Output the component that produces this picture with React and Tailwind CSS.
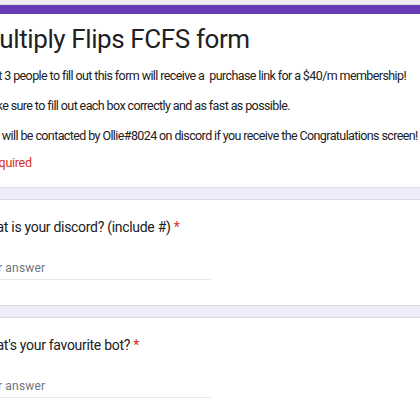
import React from "react";

const questions = [
  { id: 1, label: "What is your discord? (include #)" },
  { id: 2, label: "What's your favourite bot?" },
];

function QuestionCard({ label }) {
  return (
    <div className="bg-white border border-[#dadce0] rounded-lg px-6 pt-[15px] pb-[25px]">
      <div className="text-[14px] leading-[24px] tracking-[-0.3px] text-[#202124]">
        {label} <span className="text-[#d93025]">*</span>
      </div>
      <div className="mt-[23px] w-[234px] border-b border-[#e8e8ec] pb-[4px]">
        <div className="text-[12px] leading-[13px] text-[#70757a] tracking-[0.2px]">
          Your answer
        </div>
      </div>
    </div>
  );
}

export default function App() {
  return (
    <div className="h-[420px] overflow-hidden bg-[#f0ebf8] pt-[4px] font-['Roboto','Liberation_Sans',sans-serif]">
      <div className="ml-[-48px] w-[640px] flex flex-col gap-[11px]">
        <div className="bg-white border border-[#dadce0] rounded-lg overflow-hidden">
          <div className="h-[9px] bg-[#673ab7]" />
          <div className="px-6 pt-[9px] pb-[17px]">
            <h1 className="text-[26px] leading-[32px] tracking-[-0.4px] text-[#202124]">
              Multiply Flips FCFS form
            </h1>
            <div className="mt-[13px] pl-[3px] flex flex-col gap-[15px] text-[12.5px] leading-[15px] tracking-[-0.6px] text-[#202124]">
              <p>
                First 3 people to fill out this form will receive a&nbsp; purchase link for a $40/m membership!
              </p>
              <p>Make sure to fill out each box correctly and as fast as possible.</p>
              <p>You will be contacted by Ollie#8024 on discord if you receive the Congratulations screen!</p>
            </div>
            <div className="mt-[12px] text-[12.5px] leading-[15px] tracking-[-0.3px] text-[#d93025]">* Required</div>
          </div>
        </div>
        {questions.map((q) => (
          <QuestionCard key={q.id} label={q.label} />
        ))}
      </div>
    </div>
  );
}
